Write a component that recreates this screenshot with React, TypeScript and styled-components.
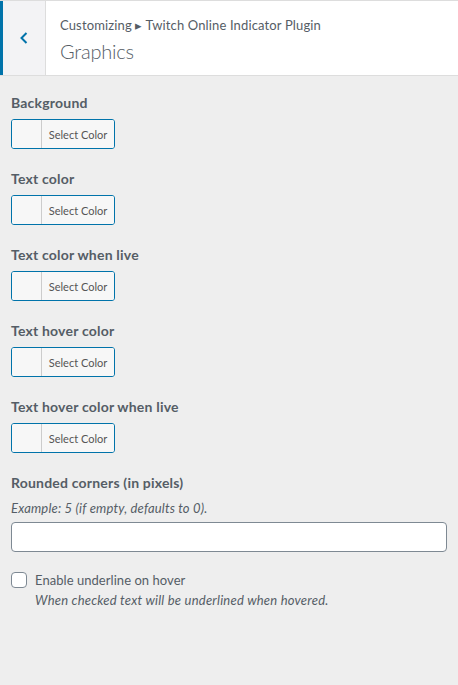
import React from "react";
import styled, { createGlobalStyle } from "styled-components";

const Global = createGlobalStyle`
  html, body { margin: 0; padding: 0; background: #eeeeee; }
  body { font-family: Lato, "Noto Sans", sans-serif; color: #555d66; }
  * { box-sizing: border-box; }
`;

const Page = styled.div`
  width: 458px;
  min-height: 685px;
  background: #eeeeee;
  display: flex;
  flex-direction: column;
`;

const Header = styled.div`
  display: flex;
  height: 76px;
  background: #fff;
  border-top: 1px solid #dddddd;
  border-bottom: 1px solid #dddddd;
`;

const BackButton = styled.button`
  width: 46px;
  height: 100%;
  padding: 0;
  margin: 0;
  border: none;
  border-left: 3px solid #0073aa;
  border-right: 1px solid #dddddd;
  background: #f3f3f5;
  display: flex;
  align-items: center;
  justify-content: center;
  color: #0073aa;
`;

const Titles = styled.div`
  display: flex;
  flex-direction: column;
  padding: 14px 0 0 14px;
`;

const Breadcrumb = styled.span`
  font-size: 13px;
  line-height: 20px;
  letter-spacing: 0.14px;
  color: #555d66;
`;

const Title = styled.h2`
  margin: 3px 0 0;
  font-size: 20px;
  font-weight: 300;
  line-height: 26px;
  letter-spacing: -0.2px;
  color: #555d66;
`;

const Controls = styled.div`
  display: flex;
  flex-direction: column;
  padding: 15px 11px 0 11px;
`;

const Control = styled.div<{ $gap?: number }>`
  display: flex;
  flex-direction: column;
  margin-bottom: ${(p) => p.$gap ?? 18}px;
`;

const ControlTitle = styled.span`
  font-size: 14px;
  font-weight: 700;
  line-height: 24px;
  letter-spacing: 0.2px;
  color: #555d66;
  margin-bottom: 4px;
`;

const Description = styled.span`
  font-size: 13px;
  font-style: italic;
  line-height: 18px;
  letter-spacing: 0.18px;
  color: #555d66;
  margin: 0 0 5px;
`;

const ColorButton = styled.button`
  display: flex;
  align-items: stretch;
  width: 104px;
  height: 30px;
  padding: 0;
  border: 1px solid #0073aa;
  border-radius: 3px;
  background: #f7f7f7;
  overflow: hidden;
  font-family: inherit;
`;

const Swatch = styled.span`
  width: 30px;
  background: #f7f7f7;
  border-right: 1px solid #cccccc;
`;

const ButtonText = styled.span`
  flex: 1;
  display: flex;
  align-items: center;
  justify-content: center;
  font-size: 11px;
  color: #555555;
  background: #f7f7f7;
`;

const TextInput = styled.input`
  width: 100%;
  height: 30px;
  border: 1px solid #7e8993;
  border-radius: 4px;
  background: #fff;
  margin: 0;
`;

const CheckRow = styled.label`
  display: grid;
  grid-template-columns: 16px 1fr;
  column-gap: 8px;
  align-items: center;
`;

const Box = styled.span`
  width: 16px;
  height: 16px;
  border: 1px solid #7e8993;
  border-radius: 4px;
  background: #fff;
`;

const CheckLabel = styled.span`
  font-size: 13px;
  line-height: 20px;
  letter-spacing: 0.05px;
  color: #555d66;
`;

const CheckDesc = styled.span`
  grid-column: 2;
  font-size: 13px;
  font-style: italic;
  line-height: 20px;
  letter-spacing: 0.22px;
  color: #555d66;
`;

const colors = [
  "Background",
  "Text color",
  "Text color when live",
  "Text hover color",
  "Text hover color when live",
];

export default function App() {
  return (
    <Page>
      <Global />
      <Header>
        <BackButton aria-label="Back">
          <svg width="12" height="14" viewBox="0 0 12 14">
            <path d="M8.5 2 L3.5 7 L8.5 12" fill="none" stroke="#0073aa" strokeWidth="2" />
          </svg>
        </BackButton>
        <Titles>
          <Breadcrumb>Customizing ▸ Twitch Online Indicator Plugin</Breadcrumb>
          <Title>Graphics</Title>
        </Titles>
      </Header>
      <Controls>
        {colors.map((c) => (
          <Control key={c}>
            <ControlTitle>{c}</ControlTitle>
            <ColorButton>
              <Swatch />
              <ButtonText>Select Color</ButtonText>
            </ColorButton>
          </Control>
        ))}
        <Control>
          <ControlTitle>Rounded corners (in pixels)</ControlTitle>
          <Description>Example: 5 (if empty, defaults to 0).</Description>
          <TextInput type="text" />
        </Control>
        <Control>
          <CheckRow>
            <Box />
            <CheckLabel>Enable underline on hover</CheckLabel>
            <CheckDesc>When checked text will be underlined when hovered.</CheckDesc>
          </CheckRow>
        </Control>
      </Controls>
    </Page>
  );
}
